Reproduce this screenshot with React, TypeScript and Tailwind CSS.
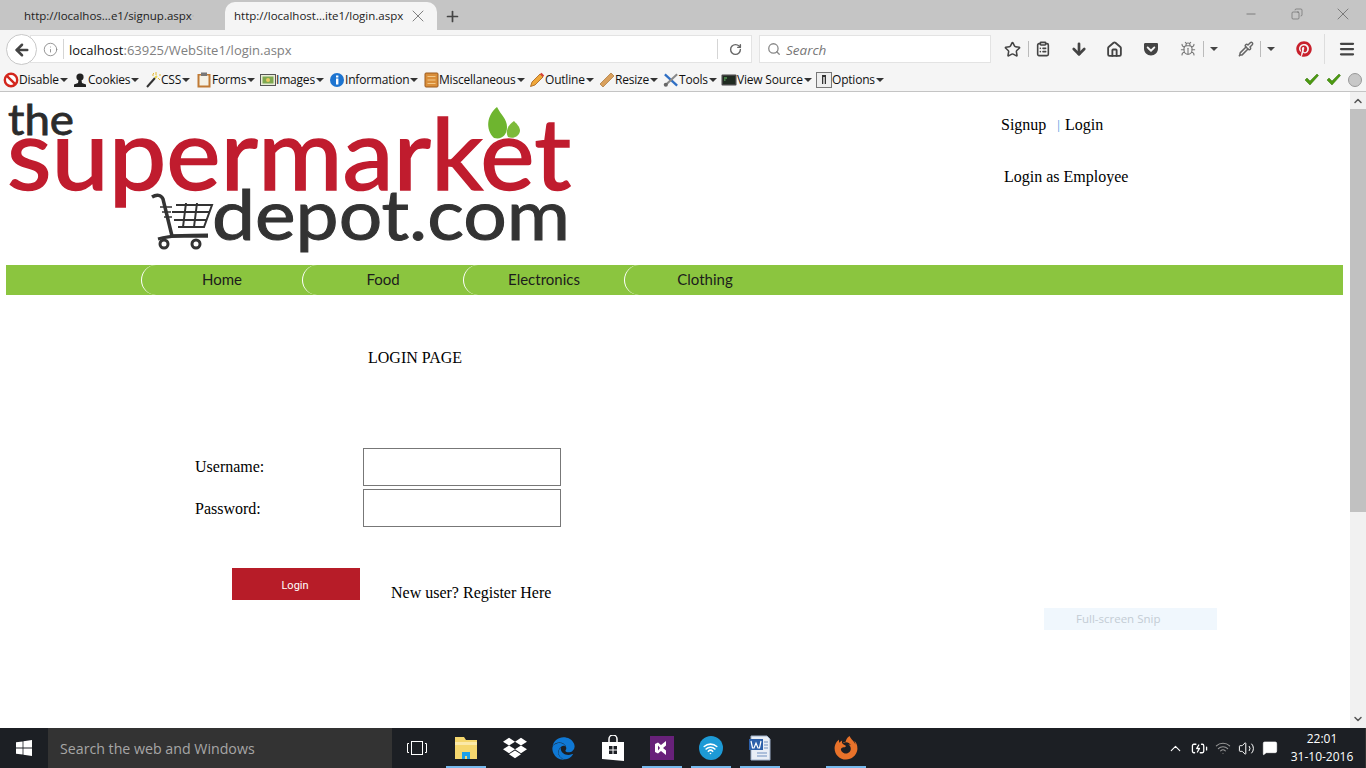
import {
  ArrowLeft,
  ArrowDown,
  ChevronUp,
  ChevronDown,
  Copy,
  Home,
  Info,
  Menu,
  Minus,
  Pipette,
  Plus,
  RotateCw,
  Search,
  Star,
  Volume2,
  Wifi,
  X,
  Bug,
  ClipboardList,
  MessageSquare,
  BatteryCharging,
} from "lucide-react";
import { FaDropbox, FaEdge, FaFirefoxBrowser, FaGetPocket, FaPinterest } from "react-icons/fa";
import type { ReactNode } from "react";

const ui = "font-['Open_Sans','Liberation_Sans',sans-serif]";

const Caret = ({ dark = false }: { dark?: boolean }) => (
  <span
    className={`inline-block w-0 h-0 border-x-[4px] border-x-transparent border-t-[4px] ${
      dark ? "border-t-[#444]" : "border-t-[#333]"
    }`}
  />
);

const Tab = ({ label, active }: { label: string; active?: boolean }) => (
  <div
    className={`h-[28px] flex items-center justify-between text-[11.5px] text-[#222] ${
      active
        ? "w-[212px] pl-[9px] pr-[9px] bg-[#f5f5f5] rounded-t-[10px]"
        : "w-[200px] pl-[24px] pr-[6px]"
    }`}
  >
    <span className="whitespace-nowrap">{label}</span>
    <X size={20} strokeWidth={0.8} className="text-[#444]" />
  </div>
);

const devItems: { label: string; icon: ReactNode; cls: string }[] = [
  {
    label: "Disable",
    cls: "w-[69px]",
    icon: (
      <svg width="16" height="16" viewBox="0 0 16 16">
        <circle cx="8" cy="8" r="6.2" fill="#fff" stroke="#d3261c" strokeWidth="2.4" />
        <path d="M3.8 3.8 12.2 12.2" stroke="#d3261c" strokeWidth="2.4" />
      </svg>
    ),
  },
  {
    label: "Cookies",
    cls: "w-[73px]",
    icon: (
      <svg width="16" height="16" viewBox="0 0 16 16">
        <circle cx="8" cy="5" r="3.6" fill="#222" />
        <path d="M6.5 8h3l.5 3 4 1.5V15H2v-2.5L6 11z" fill="#222" />
      </svg>
    ),
  },
  {
    label: "CSS",
    cls: "w-[51px]",
    icon: (
      <svg width="16" height="16" viewBox="0 0 16 16">
        <path d="M2 15 10 6" stroke="#333" strokeWidth="2" />
        <path d="M10 6 12 4" stroke="#e8d44a" strokeWidth="2" />
        <path d="M11 0v3M14 3h2M7 3h2M13 6l2 2M8 1l1 1" stroke="#e5b92c" strokeWidth="1" />
      </svg>
    ),
  },
  {
    label: "Forms",
    cls: "w-[64px]",
    icon: (
      <svg width="16" height="16" viewBox="0 0 16 16">
        <rect x="1.5" y="2" width="13" height="13.5" fill="#c07a35" />
        <rect x="3.5" y="3.5" width="9" height="10" fill="#f4f1e6" />
        <rect x="5" y="0.5" width="6" height="3.5" fill="#777" />
      </svg>
    ),
  },
  {
    label: "Images",
    cls: "w-[69px]",
    icon: (
      <svg width="16" height="16" viewBox="0 0 16 16">
        <rect x="0.5" y="2.5" width="15" height="11" fill="#e8ecd8" stroke="#555" />
        <rect x="2.5" y="4.5" width="11" height="7" fill="#7ea850" />
        <circle cx="8" cy="8" r="2" fill="#e8c860" />
      </svg>
    ),
  },
  {
    label: "Information",
    cls: "w-[94px]",
    icon: (
      <svg width="16" height="16" viewBox="0 0 16 16">
        <circle cx="8" cy="8" r="7" fill="#1d74d0" />
        <rect x="7" y="6.5" width="2.4" height="6" fill="#fff" />
        <rect x="7" y="3.5" width="2.4" height="2" fill="#fff" />
      </svg>
    ),
  },
  {
    label: "Miscellaneous",
    cls: "w-[106px]",
    icon: (
      <svg width="15" height="16" viewBox="0 0 15 16">
        <rect x="1" y="1" width="13" height="14" rx="1" fill="#d98e3a" stroke="#9c5a1c" />
        <path d="M3.5 4.5h8M3.5 8h8M3.5 11.5h8" stroke="#f3c98a" />
      </svg>
    ),
  },
  {
    label: "Outline",
    cls: "w-[70px]",
    icon: (
      <svg width="16" height="16" viewBox="0 0 16 16">
        <path d="M1.5 14.5 3 10l8-8 3 3-8 8z" fill="#efa73a" stroke="#a65f17" strokeWidth="0.8" />
        <path d="M11 2l1.5-1.2 2.7 2.7L14 5z" fill="#d8423a" />
      </svg>
    ),
  },
  {
    label: "Resize",
    cls: "w-[64px]",
    icon: (
      <svg width="16" height="16" viewBox="0 0 16 16">
        <path d="M1 12 12 1l3 3L4 15z" fill="#d9a05c" stroke="#a87435" strokeWidth="0.7" />
      </svg>
    ),
  },
  {
    label: "Tools",
    cls: "w-[58px]",
    icon: (
      <svg width="17" height="16" viewBox="0 0 17 16">
        <path d="M2 2 15 14" stroke="#2f6fc4" strokeWidth="2.4" />
        <path d="M15 2 3 13" stroke="#888" strokeWidth="2.2" />
        <circle cx="3" cy="13" r="2.2" fill="#666" />
      </svg>
    ),
  },
  {
    label: "View Source",
    cls: "w-[95px]",
    icon: (
      <svg width="16" height="16" viewBox="0 0 16 16">
        <rect x="0.5" y="2.5" width="15" height="11" rx="1" fill="#444" />
        <rect x="2" y="4" width="12" height="8" fill="#1f2a20" />
        <path d="M3 6h3M3 8h1.5" stroke="#6fcf6f" />
      </svg>
    ),
  },
  {
    label: "Options",
    cls: "w-[68px]",
    icon: (
      <svg width="16" height="16" viewBox="0 0 16 16">
        <rect x="0.5" y="0.5" width="15" height="15" fill="#eee" stroke="#777" />
        <rect x="6" y="3" width="4" height="9" fill="#333" />
        <rect x="7.2" y="5" width="1.6" height="7" fill="#ddd" />
      </svg>
    ),
  },
];

const Check = () => (
  <svg width="15" height="13" viewBox="0 0 15 13">
    <path d="M1 7l2-2 3 3 7-7 1.5 1.5L6 12z" fill="#4c9a10" stroke="#33700a" strokeWidth="0.5" />
  </svg>
);

const Logo = () => (
  <svg width="576" height="172" viewBox="0 0 576 172" className="block">
    <text x="8" y="42" fontFamily="Lato" fontSize="42" fill="#2b2b2b" stroke="#2b2b2b" strokeWidth="0.8" textLength="66" lengthAdjust="spacingAndGlyphs">
      the
    </text>
    <text x="7" y="97" fontFamily="Lato" fontSize="98" fill="#c01c2e" stroke="#c01c2e" strokeWidth="1.5" textLength="564" lengthAdjust="spacingAndGlyphs">
      supermarket
    </text>
    <text x="212" y="147" fontFamily="Lato" fontSize="70" fill="#333" stroke="#333" strokeWidth="1" textLength="358" lengthAdjust="spacingAndGlyphs">
      depot.com
    </text>
    {/* leaves */}
    <path d="M497 14c-10 8-12 22-3 31 8 2 13-3 13-11 0-8-6-12-10-20z" fill="#6eb52f" />
    <path d="M514 28c-6 4-9 10-6 16 5 2 11 0 12-6 0-4-3-7-6-10z" fill="#7dbb3a" />
    {/* cart */}
    <g fill="none" stroke="#333" strokeWidth="3">
      <path d="M152 104c5-3 9-2 11 2l9 37h36" strokeWidth="3.5" />
      <path d="M176 112h36l-8 22h-26M186 110l-3 24M197 110l-3 24M172 119h38M174 127h32" strokeWidth="2" />
      <path d="M160 114h12M162 119h9M164 124h8" strokeWidth="1.5" />
      <circle cx="164" cy="151" r="4" />
      <circle cx="196" cy="151" r="4" />
      <path d="M158 146c14-4 32-4 50-4" strokeWidth="3" />
    </g>
  </svg>
);

const TaskCell = ({ children, open }: { children: ReactNode; open?: boolean }) => (
  <div className="relative w-[49px] h-full flex items-center justify-center">
    {children}
    {open && <div className="absolute bottom-0 left-[5px] w-[40px] h-[2px] bg-[#76b9ed]" />}
  </div>
);

const navLinks = ["Home", "Food", "Electronics", "Clothing"];

export default function App() {
  return (
    <div className={`w-[1366px] h-[768px] overflow-hidden flex flex-col bg-white ${ui}`}>
      {/* tabs */}
      <div className="h-[30px] bg-[#c5c5c5] flex shrink-0">
        <div className="flex items-start pt-[2px]">
          <Tab label="http://localhos...e1/signup.aspx" />
          <div className="w-[25px]" />
          <Tab label="http://localhost...ite1/login.aspx" active />
          <Plus size={17} strokeWidth={2.4} className="ml-[7px] mt-[6px] text-[#444]" />
        </div>
        <div className="flex-1" />
        <div className="h-full flex items-start pt-[4px] text-[#555]">
          <Minus size={14} strokeWidth={1.1} className="mr-[33px] mt-[3px]" />
          <Copy size={12} strokeWidth={1.1} className="mr-[30px] mt-[4px] -scale-x-100" />
          <X size={20} strokeWidth={0.8} className="mr-[13px]" />
        </div>
      </div>

      {/* url bar */}
      <div className="h-[38px] bg-[#f5f5f5] flex items-center shrink-0 relative pl-[30px]">
        <div className="absolute left-[6px] top-[4px] w-[31px] h-[31px] rounded-full bg-white border border-[#c8c8c8] flex items-center justify-center z-10">
          <ArrowLeft size={18} strokeWidth={3.4} className="text-[#444]" />
        </div>
        <div className="w-[722px] h-[28px] bg-white border border-[#e3e3e3] flex items-center pl-[12px]">
          <Info size={15} strokeWidth={1.4} className="text-[#888]" />
          <div className="w-px h-[20px] bg-[#d5d5d5] ml-[5px] mr-[5px]" />
          <span className="text-[13px] text-[#111] whitespace-nowrap pt-[3px]">
            localhost<span className="text-[#808080]">:63925/WebSite1/login.aspx</span>
          </span>
          <div className="flex-1" />
          <div className="w-px h-[20px] bg-[#d5d5d5]" />
          <RotateCw size={13} strokeWidth={2.6} className="text-[#666] ml-[11px] mr-[9px]" />
        </div>
        <div className="ml-[7px] w-[232px] h-[28px] bg-white border border-[#e3e3e3] flex items-center pl-[7px]">
          <Search size={14} strokeWidth={2.2} className="text-[#888]" />
          <span className="ml-[5px] text-[13.5px] italic text-[#777] pt-[2px]">Search</span>
        </div>
        <div className="flex items-center ml-[13px] h-full text-[#444]">
          <Star size={17} strokeWidth={2.2} className="text-[#444]" />
          <div className="w-px h-[16px] bg-[#bbb] ml-[7px] mr-[6px]" />
          <ClipboardList size={16} strokeWidth={2.4} />
          <ArrowDown size={18} strokeWidth={3.6} className="ml-[19px]" />
          <Home size={17} strokeWidth={2.6} className="ml-[18px]" />
          <FaGetPocket size={16} className="ml-[20px]" />
          <Bug size={16} strokeWidth={1.6} className="ml-[21px] text-[#777]" />
          <div className="w-px h-[16px] bg-[#bbb] ml-[7px] mr-[6px]" />
          <Caret dark />
          <Pipette size={16} strokeWidth={2.2} className="ml-[20px] text-[#666]" />
          <div className="w-px h-[16px] bg-[#bbb] ml-[6px] mr-[6px]" />
          <Caret dark />
          <FaPinterest size={16} className="ml-[21px] text-[#c8202c]" />
          <div className="w-px h-[30px] bg-[#ddd] ml-[12px] mr-[13px]" />
          <Menu size={18} strokeWidth={3} />
        </div>
      </div>

      {/* web developer toolbar */}
      <div className="h-[24px] bg-[#f5f5f5] border-b border-[#c4c4c4] flex items-center shrink-0 pl-[3px] text-[12px] text-[#111]">
        {devItems.map((item) => (
          <div key={item.label} className={`flex items-center shrink-0 ${item.cls}`}>
            <span className="w-[16px] shrink-0 flex justify-center">{item.icon}</span>
            <span className="whitespace-nowrap tracking-[-0.2px]">{item.label}</span>
            <span className="ml-[1px] flex"><Caret /></span>
          </div>
        ))}
        <div className="flex-1" />
        <div className="flex items-center gap-[7px] pr-[4px]">
          <Check />
          <Check />
          <div className="w-[14px] h-[14px] rounded-full bg-[#c8c8c8] border border-[#999]" />
        </div>
      </div>

      {/* page + scrollbar */}
      <div className="flex-1 flex min-h-0">
        <div className="flex-1 relative font-['Liberation_Serif',serif] text-[16px] text-black">
          <div className="flex h-[173px]">
            <div className="w-[1001px] pt-[1px] shrink-0">
              <Logo />
            </div>
            <div className="pt-[21px]">
              <div className="flex items-center">
                <span>Signup</span>
                <span className="ml-[11px] mr-[5px] text-[#3f8fdc] text-[13px]">|</span>
                <span>Login</span>
              </div>
              <div className="mt-[28px] ml-[3px]">Login as Employee</div>
            </div>
          </div>

          <div className="mx-[6px] w-[1337px] h-[30px] bg-[#8bc53f] flex pl-[135px] font-['Lato',sans-serif] text-[15px] text-[#1c1c1c]">
            {navLinks.map((link) => (
              <div
                key={link}
                className="w-[161px] h-full flex items-center justify-center pb-[1px] border-l border-white rounded-l-[16px]"
              >
                {link}
              </div>
            ))}
          </div>

          <div className="pl-[368px] pt-[51px] leading-[24px]">LOGIN PAGE</div>

          <div className="pl-[195px] pt-[78px]">
            <div className="flex items-center h-[38px] mb-[3px]">
              <label className="w-[168px]">Username:</label>
              <input className="w-[198px] h-[38px] border border-[#777] bg-white outline-none" />
            </div>
            <div className="flex items-center h-[38px]">
              <label className="w-[168px] pt-[2px]">Password:</label>
              <input type="password" className="w-[198px] h-[38px] border border-[#777] bg-white outline-none" />
            </div>
          </div>

          <div className="flex pl-[232px] pt-[41px]">
            <button className="w-[128px] h-[32px] bg-[#b71c28] text-white text-[11px] font-['Roboto',sans-serif] pt-[4px] pr-[2px]">
              Login
            </button>
            <div className="ml-[31px] pt-[13px] leading-[24px]">New user? Register Here</div>
          </div>

          <div className="absolute left-[1044px] top-[516px] w-[173px] h-[22px] bg-[#f0f7fd] flex items-center pl-[32px] font-['Open_Sans',sans-serif] text-[11.5px] text-[#c3ccd4]">
            Full-screen Snip
          </div>
        </div>

        {/* scrollbar */}
        <div className="w-[16px] bg-[#f1f1f1] flex flex-col items-center shrink-0">
          <ChevronUp size={12} strokeWidth={3} className="text-[#555] my-[3px]" />
          <div className="w-full h-[403px] bg-[#c1c1c1] mt-[-1px]" />
          <div className="flex-1" />
          <ChevronDown size={12} strokeWidth={3} className="text-[#555] my-[3px]" />
        </div>
      </div>

      {/* taskbar */}
      <div className="h-[40px] bg-[#1c1f24] flex items-center shrink-0 text-white">
        <div className="w-[48px] h-full flex items-center justify-center">
          <svg width="16" height="16" viewBox="0 0 16 16" fill="#fff">
            <path d="M0 2.3 6.6 1.4v6.2H0zM7.4 1.3 16 0v7.6H7.4zM0 8.4h6.6v6.2L0 13.7zM7.4 8.4H16V16l-8.6-1.3z" />
          </svg>
        </div>
        <div className="w-[344px] h-full bg-[#333333] flex items-center pl-[12px] pt-[1px] text-[14.2px] text-[#a6a6a6]">
          Search the web and Windows
        </div>
        <TaskCell>
          <svg width="20" height="14" viewBox="0 0 20 14" fill="none" stroke="#fff">
            <rect x="4.5" y="0.5" width="11" height="13" />
            <path d="M2 2.5H.5v9H2M18 2.5h1.5v9H18" />
          </svg>
        </TaskCell>
        <TaskCell open>
          <svg width="22" height="24" viewBox="0 0 22 24">
            <path d="M0 1h9l2 3h11v19H0z" fill="#f5d76e" />
            <path d="M0 6h22v3H0z" fill="#fbe9a8" />
            <path d="M7 23v-7h8v7h-3v-3h-2v3z" fill="#1da1e8" />
          </svg>
        </TaskCell>
        <TaskCell>
          <FaDropbox size={24} className="text-white" />
        </TaskCell>
        <TaskCell>
          <FaEdge size={23} className="text-[#0f78d4]" />
        </TaskCell>
        <TaskCell>
          <svg width="22" height="26" viewBox="0 0 22 26">
            <path d="M7 7V4a4 4 0 0 1 8 0v3" fill="none" stroke="#fff" strokeWidth="1.5" />
            <path d="M0 7h22v19L0 24z" fill="#fff" />
            <path d="M7 11h3.5v3.5H7zM11.5 11H15v3.5h-3.5zM7 15.5h3.5V19H7zM11.5 15.5H15V19h-3.5z" fill="#1c1f24" />
          </svg>
        </TaskCell>
        <TaskCell open>
          <svg width="24" height="24" viewBox="0 0 24 24">
            <rect width="24" height="24" fill="#68217a" />
            <path d="M16 5v14l-5-4-3 2.5L5 16V8l3-1.5L11 9zM8 9.5v5l2-2.5zM13 12l3 2.5v-5z" fill="#fff" fillRule="evenodd" />
          </svg>
        </TaskCell>
        <TaskCell open>
          <div className="w-[24px] h-[24px] rounded-full bg-[#1d9ad6] flex items-center justify-center">
            <Wifi size={15} strokeWidth={2.6} className="text-white" />
          </div>
        </TaskCell>
        <TaskCell open>
          <svg width="24" height="26" viewBox="0 0 24 26">
            <path d="M3 1h16l3 3v21H3z" fill="#e9eef6" stroke="#9fb2cc" />
            <path d="M1 4h14v11H1z" fill="#2b5faa" />
            <path d="M3 6l1.500 7h1.500l2-5 2 5h1.500l1.500-7" fill="none" stroke="#fff" strokeWidth="1.2" />
            <path d="M9 18h10M9 21h10M16 7h4M16 10h4M16 13h4" stroke="#6f8fbf" />
          </svg>
        </TaskCell>
        <div className="w-[37px]" />
        <TaskCell open>
          <FaFirefoxBrowser size={24} className="text-[#e8722a]" />
        </TaskCell>
        <div className="flex-1" />
        <div className="flex items-center">
          <ChevronUp size={17} strokeWidth={1.6} className="mr-[7px]" />
          <BatteryCharging size={17} strokeWidth={1.8} className="mr-[7px]" />
          <Wifi size={16} strokeWidth={1.6} className="mr-[7px] text-[#999]" />
          <Volume2 size={17} strokeWidth={1.4} className="mr-[7px]" />
          <MessageSquare size={16} fill="#fff" strokeWidth={1} />
          <div className="w-[80px] ml-[4px] mr-[3px] text-[12px] leading-[18px] text-center">
            <div>22:01</div>
            <div>31-10-2016</div>
          </div>
        </div>
        <div className="w-[1px] h-full bg-[#333]" />
      </div>
    </div>
  );
}
